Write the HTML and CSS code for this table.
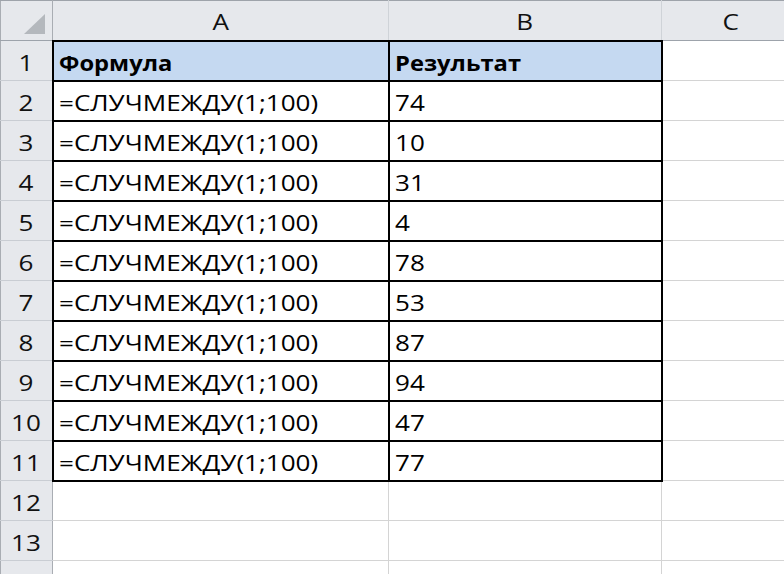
FILE: index.html
```html
<!DOCTYPE html>
<html lang="ru">
<head>
<meta charset="utf-8">
<link rel="stylesheet" href="styles.css">
</head>
<body>
<table class="sheet">
  <colgroup>
    <col class="c-rh"><col class="c-a"><col class="c-b"><col class="c-c">
  </colgroup>
  <thead>
    <tr class="hdr">
      <th class="corner"><svg width="52" height="38" viewBox="0 0 52 38"><polygon points="23,32 44,32 44,12" fill="#b4b8bd"/></svg></th>
      <th class="col"><span class="t">A</span></th>
      <th class="col"><span class="t">B</span></th>
      <th class="col"><span class="t">C</span></th>
    </tr>
  </thead>
  <tbody>
    <tr><th class="rh"><span class="t">1</span></th><td class="d head"><span class="t">Формула</span></td><td class="d head"><span class="t">Результат</span></td><td class="e"></td></tr>
    <tr><th class="rh"><span class="t">2</span></th><td class="d"><span class="t">=СЛУЧМЕЖДУ(1;100)</span></td><td class="d"><span class="t">74</span></td><td class="e"></td></tr>
    <tr><th class="rh"><span class="t">3</span></th><td class="d"><span class="t">=СЛУЧМЕЖДУ(1;100)</span></td><td class="d"><span class="t">10</span></td><td class="e"></td></tr>
    <tr><th class="rh"><span class="t">4</span></th><td class="d"><span class="t">=СЛУЧМЕЖДУ(1;100)</span></td><td class="d"><span class="t">31</span></td><td class="e"></td></tr>
    <tr><th class="rh"><span class="t">5</span></th><td class="d"><span class="t">=СЛУЧМЕЖДУ(1;100)</span></td><td class="d"><span class="t">4</span></td><td class="e"></td></tr>
    <tr><th class="rh"><span class="t">6</span></th><td class="d"><span class="t">=СЛУЧМЕЖДУ(1;100)</span></td><td class="d"><span class="t">78</span></td><td class="e"></td></tr>
    <tr><th class="rh"><span class="t">7</span></th><td class="d"><span class="t">=СЛУЧМЕЖДУ(1;100)</span></td><td class="d"><span class="t">53</span></td><td class="e"></td></tr>
    <tr><th class="rh"><span class="t">8</span></th><td class="d"><span class="t">=СЛУЧМЕЖДУ(1;100)</span></td><td class="d"><span class="t">87</span></td><td class="e"></td></tr>
    <tr><th class="rh"><span class="t">9</span></th><td class="d"><span class="t">=СЛУЧМЕЖДУ(1;100)</span></td><td class="d"><span class="t">94</span></td><td class="e"></td></tr>
    <tr><th class="rh"><span class="t">10</span></th><td class="d"><span class="t">=СЛУЧМЕЖДУ(1;100)</span></td><td class="d"><span class="t">47</span></td><td class="e"></td></tr>
    <tr><th class="rh"><span class="t">11</span></th><td class="d"><span class="t">=СЛУЧМЕЖДУ(1;100)</span></td><td class="d"><span class="t">77</span></td><td class="e"></td></tr>
    <tr><th class="rh"><span class="t">12</span></th><td class="e"></td><td class="e"></td><td class="e"></td></tr>
    <tr><th class="rh"><span class="t">13</span></th><td class="e"></td><td class="e"></td><td class="e"></td></tr>
    <tr><th class="rh"></th><td class="e"></td><td class="e"></td><td class="e"></td></tr>
  </tbody>
</table>
</body>
</html>
```
FILE: styles.css
```css
html, body {
  margin: 0;
  padding: 0;
  background: #fff;
  overflow: hidden;
}
.sheet {
  border-collapse: collapse;
  table-layout: fixed;
  width: 800px;
  font-family: "Open Sans", "Liberation Sans", sans-serif;
  font-size: 21px;
  color: #111;
}
.c-rh { width: 52px; }
.c-a { width: 336px; }
.c-b { width: 273px; }
.c-c { width: 139px; }
tr { height: 40px; }
th, td {
  padding: 0;
  overflow: hidden;
  white-space: nowrap;
}
.t {
  display: inline-block;
  transform: scaleX(1.24);
  transform-origin: center;
}
.d .t {
  transform-origin: left center;
}
.d.head .t {
  transform: scaleX(1.13);
}
.hdr th {
  background: #e6e8ec;
  border-top: 1px solid #9ea3aa;
  border-bottom: 1px solid #9da3ab;
  border-right: 1px solid #cfd3d8;
  font-weight: normal;
  text-align: center;
  vertical-align: middle;
  padding-top: 3px;
}
.hdr .corner {
  border-left: 1px solid #a9adb3;
  border-right: 1px solid #a9adb3;
  padding: 0;
  line-height: 0;
}
.rh {
  background: #e6e8ec;
  border-left: 1px solid #a9adb3;
  border-right: 1px solid #a9adb3;
  border-bottom: 1px solid #c9cdd3;
  font-weight: normal;
  text-align: center;
  vertical-align: middle;
  padding-top: 4px;
}
.e {
  border-right: 1px solid #d4d4d4;
  border-bottom: 1px solid #d4d4d4;
}
.d {
  border: 2px solid #000;
  padding-left: 5px;
  padding-top: 4px;
  vertical-align: middle;
  color: #000;
}
.d.head {
  background: #c5d9f1;
  font-weight: bold;
}
```
